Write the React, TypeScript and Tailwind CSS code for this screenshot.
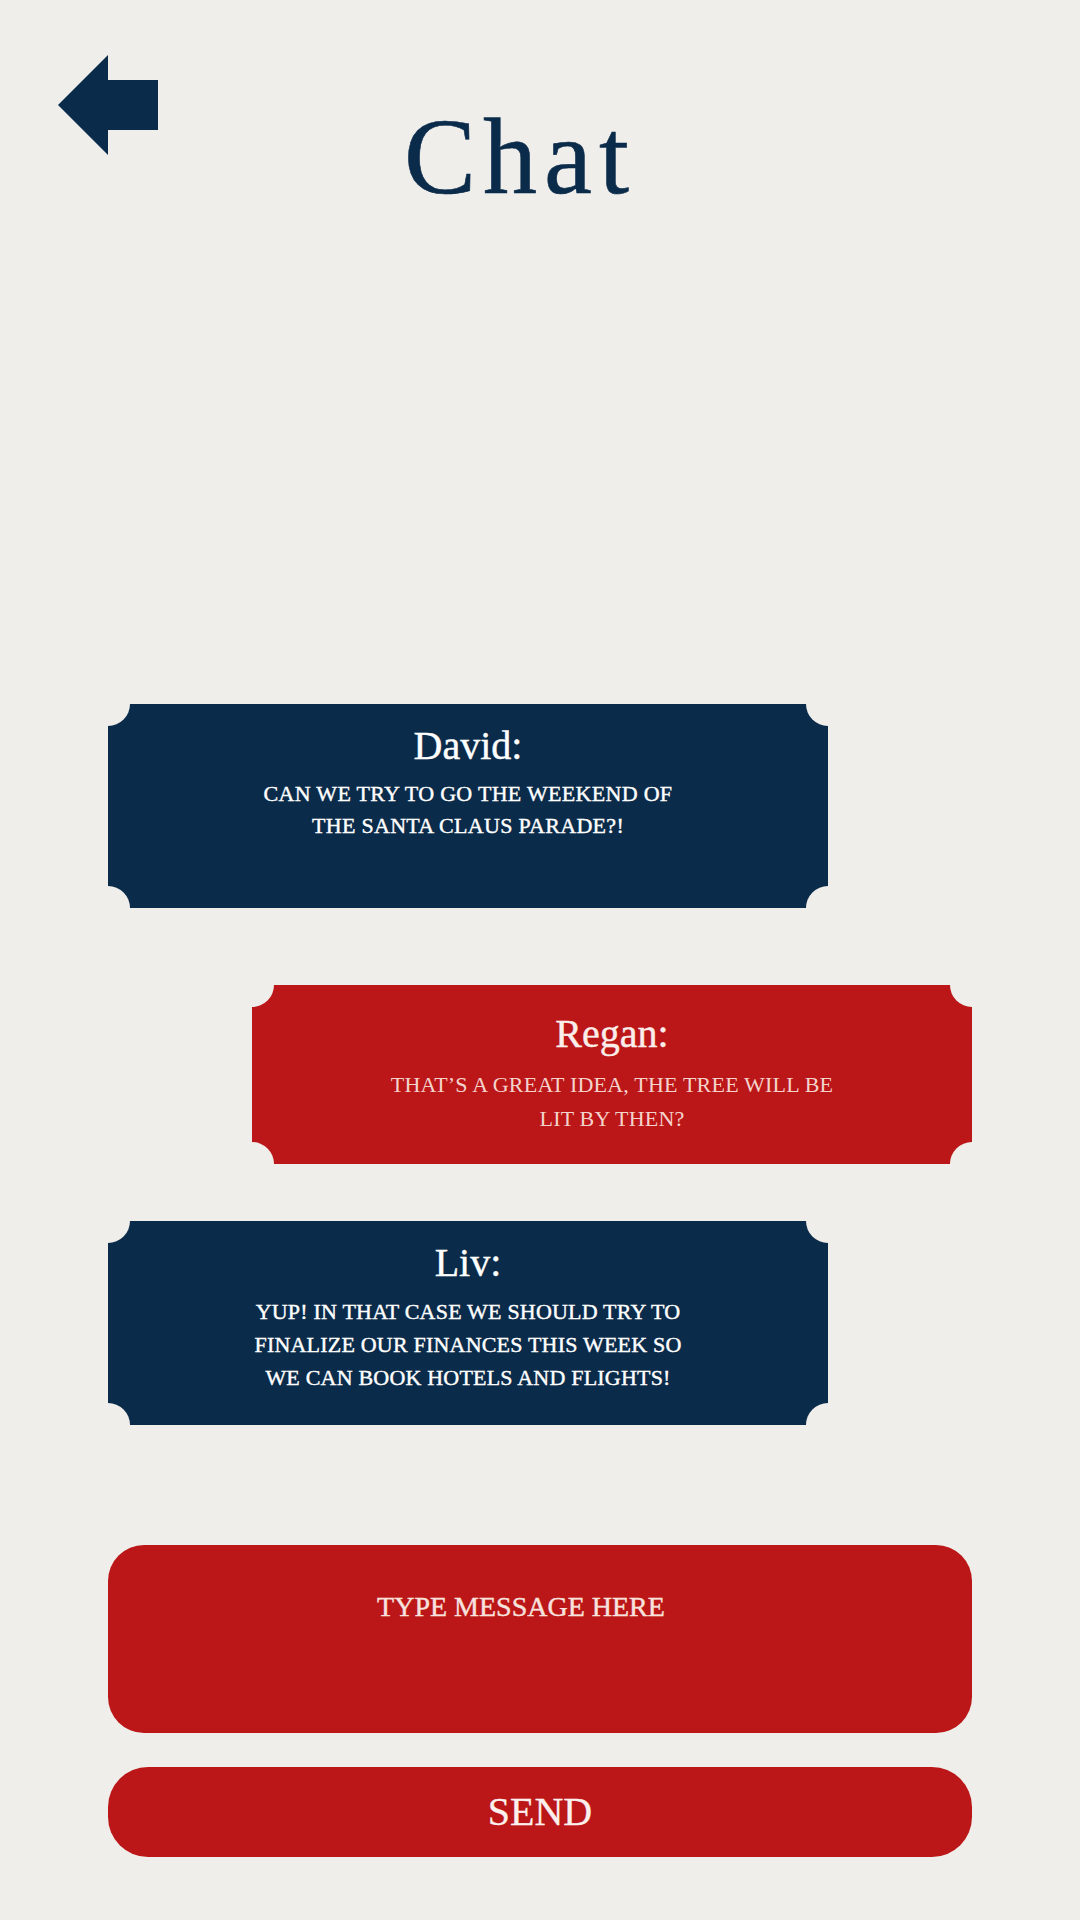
import React from "react";

const serif = { fontFamily: '"Liberation Serif", "Times New Roman", serif' };

function Notches() {
  return (
    <>
      <span className="absolute -left-[22px] -top-[22px] h-[44px] w-[44px] rounded-full bg-[#efeeea]" />
      <span className="absolute -right-[22px] -top-[22px] h-[44px] w-[44px] rounded-full bg-[#efeeea]" />
      <span className="absolute -left-[22px] -bottom-[22px] h-[44px] w-[44px] rounded-full bg-[#efeeea]" />
      <span className="absolute -right-[22px] -bottom-[22px] h-[44px] w-[44px] rounded-full bg-[#efeeea]" />
    </>
  );
}

export default function App() {
  return (
    <div
      className="flex h-[1920px] w-[1080px] flex-col overflow-hidden bg-[#efeeea]"
      style={serif}
    >
      {/* Header */}
      <div className="flex h-[205px] items-start pl-[58px] pt-[55px]">
        <svg width="100" height="100" viewBox="0 0 100 100" className="shrink-0">
          <polygon
            points="0,50 50,0 50,25 100,25 100,75 50,75 50,100"
            fill="#0b2b4a"
          />
        </svg>
        <h1 className="ml-[246px] mt-[48px] text-[108px] leading-[108px] tracking-[7px] text-[#0b2b4a] [-webkit-text-stroke:0.6px_#0b2b4a]">
          Chat
        </h1>
      </div>

      {/* David */}
      <div className="relative ml-[108px] mt-[499px] h-[204px] w-[720px] overflow-hidden bg-[#0b2b4a] text-center text-white">
        <Notches />
        <div className="pt-[18px] text-[40px] leading-[48px] [-webkit-text-stroke:0.4px_white]">David:</div>
        <div className="mt-[8px] text-[22px] leading-[32px] tracking-[0.3px] [-webkit-text-stroke:0.4px_white]">
          CAN WE TRY TO GO THE WEEKEND OF
          <br />
          THE SANTA CLAUS PARADE?!
        </div>
      </div>

      {/* Regan */}
      <div className="relative ml-[252px] mt-[77px] h-[179px] w-[720px] overflow-hidden bg-[#bc1718] text-center">
        <Notches />
        <div className="pt-[25px] text-[40px] leading-[48px] text-[#fbeeea] [-webkit-text-stroke:0.4px_#fbeeea]">Regan:</div>
        <div className="mt-[10px] text-[22px] leading-[34px] tracking-[0.2px] text-[#f4d3cd]">
          THAT’S A GREAT IDEA, THE TREE WILL BE
          <br />
          LIT BY THEN?
        </div>
      </div>

      {/* Liv */}
      <div className="relative ml-[108px] mt-[57px] h-[204px] w-[720px] overflow-hidden bg-[#0b2b4a] text-center text-white">
        <Notches />
        <div className="pt-[18px] text-[40px] leading-[48px] [-webkit-text-stroke:0.4px_white]">Liv:</div>
        <div className="mt-[8px] text-[22px] leading-[33px] tracking-[0.2px] [-webkit-text-stroke:0.4px_white]">
          YUP! IN THAT CASE WE SHOULD TRY TO
          <br />
          FINALIZE OUR FINANCES THIS WEEK SO
          <br />
          WE CAN BOOK HOTELS AND FLIGHTS!
        </div>
      </div>

      {/* Input */}
      <div className="ml-[108px] mt-[120px] h-[188px] w-[864px] rounded-[36px] bg-[#bc1718] pr-[38px] pt-[46px] text-center">
        <div className="text-[28px] leading-[32px] text-[#f7e2de] [-webkit-text-stroke:0.4px_#f7e2de]">
          TYPE MESSAGE HERE
        </div>
      </div>

      {/* Send */}
      <div className="ml-[108px] mt-[34px] flex h-[90px] w-[864px] items-center justify-center rounded-[40px] bg-[#bc1718]">
        <span className="text-[40px] leading-[48px] text-[#fbf0ee] [-webkit-text-stroke:0.3px_#fbf0ee]">SEND</span>
      </div>
    </div>
  );
}
